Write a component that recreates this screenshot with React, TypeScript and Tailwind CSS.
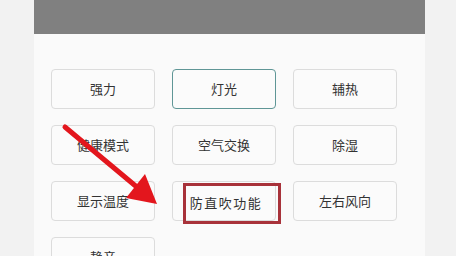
import React from "react";

const items = [
  "强力", "灯光", "辅热",
  "健康模式", "空气交换", "除湿",
  "显示温度", "防直吹功能", "左右风向",
  "静音",
];

export default function App() {
  return (
    <div
      className="relative w-[456px] h-[256px] overflow-hidden bg-[#f2f2f2] flex"
      style={{ fontFamily: '"Noto Sans CJK SC", "Noto Sans", sans-serif' }}
    >
      <div className="w-[34px] shrink-0" />
      <div className="w-[391px] shrink-0 flex flex-col">
        <div className="h-[34px] shrink-0 bg-[#808080]" />
        <div className="flex-1 min-h-0 bg-[#fafafa] pl-[17px] pt-[35px]">
          <div className="grid grid-cols-[104px_104px_104px] auto-rows-[40px] gap-x-[17px] gap-y-[16px]">
            {items.map((t, i) => (
              <div
                key={t}
                className={
                  i === 1
                    ? "flex items-center justify-center rounded-[4px] border border-[#5f9696] bg-[#fbfbfb] text-[13px] text-[#333]"
                    : i === 7
                    ? "flex items-center justify-center rounded-[4px] border border-[#dcdcdc] bg-[#fbfbfb] text-[13px] text-[#333] tracking-[1.5px] pt-[4px] pl-[4px]"
                    : "flex items-center justify-center rounded-[4px] border border-[#dcdcdc] bg-[#fbfbfb] text-[13px] text-[#333]"
                }
              >
                {t}
              </div>
            ))}
          </div>
        </div>
      </div>
      <div className="absolute left-[183px] top-[183px] w-[98px] h-[41px] border-[3px] border-[#a8323a]" />
      <svg className="absolute left-0 top-0" width="456" height="256" viewBox="0 0 456 256">
        <line x1="65" y1="127" x2="138" y2="188" stroke="#e3161d" strokeWidth="5" strokeLinecap="round" />
        <polygon points="145,174 126,198 157,204" fill="#e3161d" />
      </svg>
    </div>
  );
}
